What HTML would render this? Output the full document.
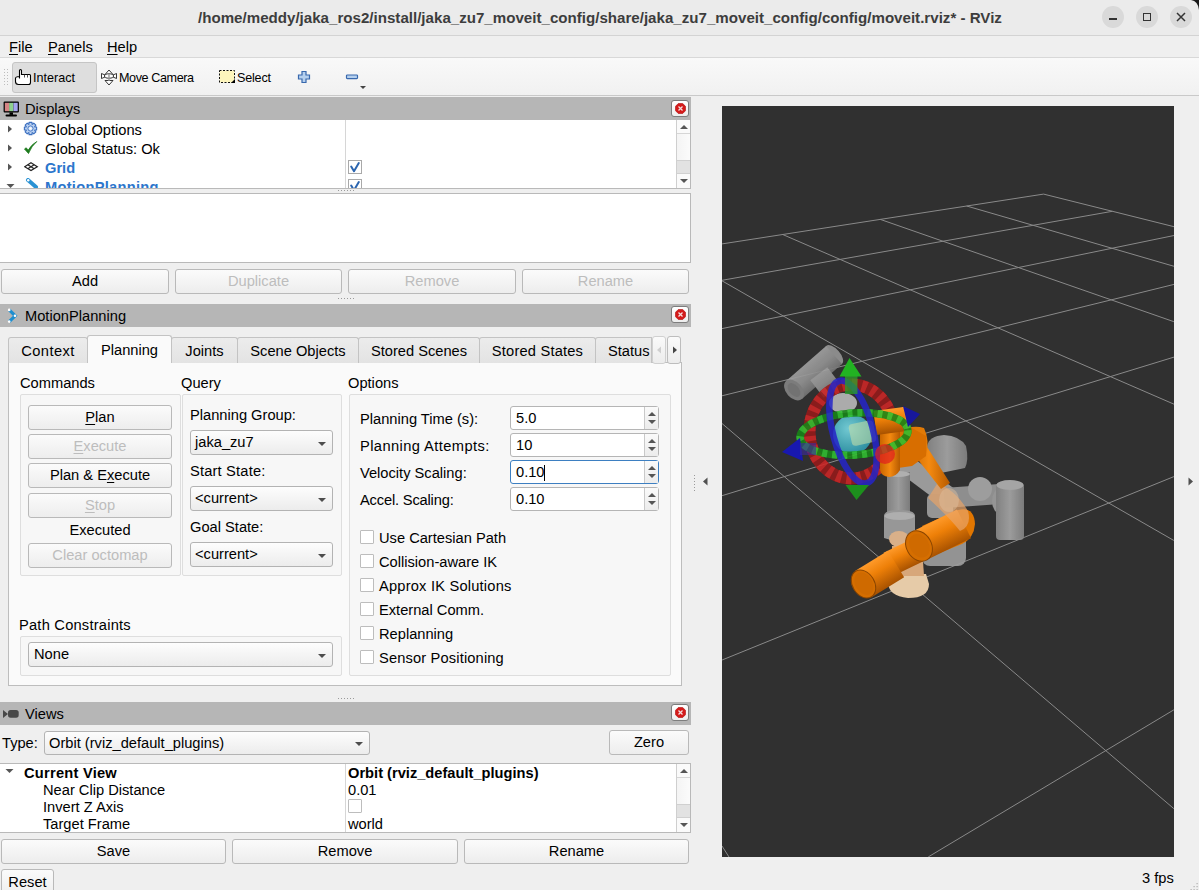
<!DOCTYPE html>
<html><head><meta charset="utf-8">
<style>
*{box-sizing:border-box}
html,body{margin:0;padding:0;width:1199px;height:890px;overflow:hidden;background:#efefef;font-family:"Liberation Sans",sans-serif;}
.a{position:absolute}
.t{position:absolute;font-size:14.67px;line-height:17px;white-space:pre;color:#000}
.u{text-decoration:underline;text-underline-offset:2px}
.btn{position:absolute;border:1px solid #b9b9b9;border-radius:3px;background:linear-gradient(#fbfbfb,#ededed);}
.btn span{position:absolute;left:0;right:0;text-align:center;font-size:14.67px;line-height:17px;white-space:pre;color:#000}
.dis span{color:#bdbdbd}
.dock{position:absolute;left:0;width:691px;height:23px;background:#b6b6b6}
.dock .t{left:25px;top:4px}
.close{position:absolute;left:671px;width:18px;height:17px;border:1px solid #7d7d7d;border-radius:3px;background:linear-gradient(#fff,#ededed)}
.close svg{position:absolute;left:3px;top:2px}
.tab{position:absolute;top:337px;height:26px;border:1px solid #c3c3c3;border-bottom:none;border-radius:3px 3px 0 0;background:linear-gradient(#ececec,#e3e3e3)}
.tab span{position:absolute;left:0;right:0;top:5px;text-align:center;font-size:14.67px;line-height:17px;white-space:pre;color:#000}
.gb{position:absolute;border:1px solid #dedede;border-radius:2px;background:#f7f7f7}
.combo{position:absolute;border:1px solid #b3b3b3;border-radius:3px;background:linear-gradient(#fdfdfd,#ececec)}
.combo span{position:absolute;left:4px;top:3px;font-size:14.67px;line-height:17px;white-space:pre;color:#000}
.arr{position:absolute;width:0;height:0;border-left:4px solid transparent;border-right:4px solid transparent;border-top:4px solid #4d4d4d;margin:1px 0 0 1px}
.spin{position:absolute;left:510px;width:149px;height:24px;border:1px solid #b5b5b5;border-radius:3px;background:#fff}
.spin span{position:absolute;left:5px;top:3px;font-size:14.67px;line-height:17px;white-space:pre;color:#000}
.spin .sb{position:absolute;left:133px;top:0;width:14px;height:22px;border-left:1px solid #c9c9c9;background:linear-gradient(#fafafa,#ececec)}
.up{position:absolute;left:3px;top:5px;width:0;height:0;border-left:4px solid transparent;border-right:4px solid transparent;border-bottom:4px solid #555}
.dn{position:absolute;left:3px;top:13px;width:0;height:0;border-left:4px solid transparent;border-right:4px solid transparent;border-top:4px solid #555}
.cb{position:absolute;width:14px;height:14px;border:1px solid #bdbdbd;background:#fff;border-radius:1px}
.scroll{position:absolute;width:15px;border-left:1px solid #d4d4d4;background:#f7f7f7}
</style></head><body>

<!-- title bar -->
<div class="a" style="left:0;top:0;width:1199px;height:36px;background:#ebebeb;border-bottom:1px solid #d3d3d3"></div>
<div class="t" style="left:198px;top:9px;font-weight:bold;color:#3d3d3d;font-size:15.12px">/home/meddy/jaka_ros2/install/jaka_zu7_moveit_config/share/jaka_zu7_moveit_config/config/moveit.rviz* - RViz</div>
<div class="a" style="left:1102px;top:6px;width:22px;height:22px;border-radius:11px;background:#d9d9d9"></div>
<div class="a" style="left:1109px;top:18px;width:8px;height:2px;background:#333"></div>
<div class="a" style="left:1136px;top:6px;width:22px;height:22px;border-radius:11px;background:#d9d9d9"></div>
<div class="a" style="left:1143px;top:13px;width:8px;height:8px;border:1.5px solid #333"></div>
<div class="a" style="left:1170px;top:6px;width:22px;height:22px;border-radius:11px;background:#d9d9d9"></div>
<svg class="a" style="left:1170px;top:6px" width="22" height="22"><path d="M7 7L15 15M15 7L7 15" stroke="#333" stroke-width="1.5"/></svg>

<!-- menu bar -->
<div class="a" style="left:0;top:36px;width:1199px;height:22px;background:#efefef;border-bottom:1px solid #d8d8d8"></div>
<div class="t" style="left:9px;top:39px"><span class="u">F</span>ile</div>
<div class="t" style="left:48px;top:39px"><span class="u">P</span>anels</div>
<div class="t" style="left:107px;top:39px"><span class="u">H</span>elp</div>

<!-- toolbar -->
<div class="a" style="left:0;top:58px;width:1199px;height:38px;background:linear-gradient(#f9f9f9,#f1f1f1);border-bottom:1px solid #c9c9c9"></div>
<div class="a" style="left:12px;top:62px;width:85px;height:31px;border:1px solid #c5c5c5;border-radius:3px;background:#dedede"></div>
<div class="t" style="left:33px;top:71px;font-size:12.6px;line-height:15px">Interact</div>
<div class="t" style="left:119px;top:71px;font-size:12.6px;line-height:15px;letter-spacing:-0.4px">Move Camera</div>
<svg class="a" style="left:219px;top:70px" width="17" height="14"><rect x="0.5" y="0.5" width="15" height="12" fill="#fdf5bd" stroke="#111" stroke-dasharray="2 1.5"/><path d="M12 13L16 13L16 9Z" fill="#000"/></svg>
<div class="t" style="left:237px;top:71px;font-size:12.6px;line-height:15px;letter-spacing:-0.2px">Select</div>


<!-- toolbar icons -->
<svg class="a" style="left:3px;top:68px" width="6" height="18"><g fill="#bdbdbd"><rect x="1" y="1" width="1" height="1"/><rect x="4" y="1" width="1" height="1"/><rect x="1" y="4" width="1" height="1"/><rect x="4" y="4" width="1" height="1"/><rect x="1" y="7" width="1" height="1"/><rect x="4" y="7" width="1" height="1"/><rect x="1" y="10" width="1" height="1"/><rect x="4" y="10" width="1" height="1"/><rect x="1" y="13" width="1" height="1"/><rect x="4" y="13" width="1" height="1"/><rect x="1" y="16" width="1" height="1"/><rect x="4" y="16" width="1" height="1"/></g></svg>
<svg class="a" style="left:14px;top:68px" width="18" height="18"><path d="M5.5 10.5V2.5Q5.5 1.5 6.5 1.5Q7.5 1.5 7.5 2.5V6.5H15.5Q16.5 6.5 16.5 7.5V14.5Q16.5 16.5 14.5 16.5H4.5Q1.5 16.5 1.5 13.5V10.5Q1.5 8.5 5.5 8.5" fill="#fff" stroke="#000" stroke-width="1.1"/><path d="M10.5 6.8V9.5M13.5 6.8V9.5" stroke="#555" stroke-width="1"/></svg>
<svg class="a" style="left:100px;top:69px" width="18" height="17"><g fill="#fff" stroke="#222" stroke-width="0.9"><path d="M9 1L5 5.5H13Z"/><path d="M9 16L5 11.5H13Z"/><path d="M1.5 4.5V9.5L5 8V6ZM16.5 4.5V9.5L13 8V6Z"/><ellipse cx="9" cy="7" rx="4.5" ry="2.2"/></g><rect x="8.3" y="5" width="1.4" height="7" fill="#999"/></svg>
<svg class="a" style="left:297px;top:70px" width="14" height="14"><path d="M5 1.5H9V5H12.5V9H9V12.5H5V9H1.5V5H5Z" fill="#b5d0ee" stroke="#3868ad" stroke-width="1.2"/></svg>
<svg class="a" style="left:345px;top:74px" width="14" height="6"><rect x="1.5" y="1" width="11" height="3.6" rx="0.8" fill="#b5d0ee" stroke="#3868ad" stroke-width="1.2"/></svg>
<svg class="a" style="left:359px;top:85px" width="8" height="5"><path d="M1 1H7L4 4Z" fill="#444"/></svg>

<!-- Displays dock -->
<div class="dock" style="top:97px"><div class="t">Displays</div></div>
<div class="close" style="top:100px"><svg width="11" height="11"><path d="M3.3 0.5H7.7L10.5 3.3V7.7L7.7 10.5H3.3L0.5 7.7V3.3Z" fill="#d41a1a" stroke="#b00c0c" stroke-width="0.6"/><path d="M3.5 3.5L7.5 7.5M7.5 3.5L3.5 7.5" stroke="#f4dede" stroke-width="1.3"/></svg></div>
<div class="a" style="left:0;top:120px;width:691px;height:69px;background:#fff;border-bottom:1px solid #b9b9b9;border-right:1px solid #b9b9b9"></div>
<div class="a" style="left:345px;top:120px;width:1px;height:68px;background:#d6d6d6"></div>
<div class="a" style="left:676px;top:120px;width:14px;height:68px;border-left:1px solid #cfcfcf;background:linear-gradient(90deg,#f4f4f4,#fbfbfb)">
<div class="a" style="left:0;top:0;width:13px;height:14px;border-bottom:1px solid #d6d6d6;background:#fafafa"><svg class="a" style="left:2px;top:4px" width="10" height="6"><path d="M1 5H9L5 1Z" fill="#555"/></svg></div>
<div class="a" style="left:0;top:40px;width:13px;height:14px;background:#e2e2e2;border-top:1px solid #d0d0d0;border-bottom:1px solid #d0d0d0"></div>
<div class="a" style="left:0;top:54px;width:13px;height:14px;background:#fafafa"><svg class="a" style="left:2px;top:4px" width="10" height="6"><path d="M1 1H9L5 5Z" fill="#555"/></svg></div>
</div>
<div class="t" style="left:45px;top:122px">Global Options</div>
<div class="t" style="left:45px;top:141px">Global Status: Ok</div>
<div class="t" style="left:45px;top:160px;font-weight:bold;color:#2c76cc">Grid</div>
<div class="a" style="left:0;top:178px;width:676px;height:10px;overflow:hidden"><div class="t" style="left:45px;top:1px;font-weight:bold;color:#2c76cc;letter-spacing:0.27px">MotionPlanning</div></div>


<svg class="a" style="left:3px;top:101px" width="17" height="17"><rect x="0.6" y="0.6" width="15.3" height="10.8" rx="1" fill="#000"/><rect x="1.8" y="1.8" width="4.3" height="8.4" fill="#d58585"/><rect x="6.1" y="1.8" width="4.3" height="8.4" fill="#8fd08f"/><rect x="10.4" y="1.8" width="4.3" height="8.4" fill="#a5a5f0"/><rect x="6.5" y="11.4" width="3.5" height="2.5" fill="#000"/><rect x="2.5" y="13.6" width="11.5" height="2" rx="1" fill="#000"/></svg>
<svg class="a" style="left:7px;top:125px" width="6" height="9"><path d="M1 0.5V7.5L5 4Z" fill="#555"/></svg>
<svg class="a" style="left:7px;top:144px" width="6" height="9"><path d="M1 0.5V7.5L5 4Z" fill="#555"/></svg>
<svg class="a" style="left:7px;top:163px" width="6" height="9"><path d="M1 0.5V7.5L5 4Z" fill="#555"/></svg>
<svg class="a" style="left:6px;top:183px" width="9" height="6"><path d="M0.5 1H8.5L4.5 5Z" fill="#555"/></svg>
<svg class="a" style="left:23px;top:121px" width="15" height="15"><path d="M11.84 5.97 L13.62 6.00 L13.62 9.00 L11.84 9.03 L11.65 9.48 L12.89 10.77 L10.77 12.89 L9.48 11.65 L9.03 11.84 L9.00 13.62 L6.00 13.62 L5.97 11.84 L5.52 11.65 L4.23 12.89 L2.11 10.77 L3.35 9.48 L3.16 9.03 L1.38 9.00 L1.38 6.00 L3.16 5.97 L3.35 5.52 L2.11 4.23 L4.23 2.11 L5.52 3.35 L5.97 3.16 L6.00 1.38 L9.00 1.38 L9.03 3.16 L9.48 3.35 L10.77 2.11 L12.89 4.23 L11.65 5.52Z" fill="#b9d0f0" stroke="#3b6fc0" stroke-width="1.1" stroke-linejoin="round"/><circle cx="7.5" cy="7.5" r="2.6" fill="#d8e6f8" stroke="#3b6fc0" stroke-width="0.9"/><circle cx="7.5" cy="7.5" r="1.1" fill="#fff"/></svg>
<svg class="a" style="left:23px;top:140px" width="15" height="15"><path d="M1.5 9L5.5 13.5Q8.5 6 13.8 1.5Q8 5 5.2 10.2L3.2 7.8Z" fill="#1c7a1c" stroke="#1c7a1c" stroke-width="0.8"/></svg>
<svg class="a" style="left:24px;top:162px" width="15" height="10"><g fill="none" stroke="#222" stroke-width="1.2"><path d="M7 0.8L13.3 4.7L7 8.6L0.7 4.7Z"/><path d="M3.85 2.75L10.15 6.65M10.15 2.75L3.85 6.65"/></g></svg>
<div class="a" style="left:0;top:178px;width:60px;height:10px;overflow:hidden"><svg class="a" style="left:25px;top:0px" width="14" height="14"><path d="M3 2L11 9" stroke="#2a92d4" stroke-width="4" stroke-linecap="round"/><circle cx="3.2" cy="2.2" r="1.2" fill="#fff"/></svg></div>
<svg class="a" style="left:347px;top:159px" width="16" height="16"><rect x="1.5" y="1.5" width="13" height="13" fill="#fff" stroke="#a9a9a9" stroke-width="1"/><path d="M4.2 7.6L7 12.2L11.8 4" fill="none" stroke="#2b65b0" stroke-width="2" stroke-linecap="round" stroke-linejoin="round"/></svg>
<div class="a" style="left:340px;top:178px;width:30px;height:10px;overflow:hidden"><svg class="a" style="left:7px;top:0px" width="16" height="16"><rect x="1.5" y="1.5" width="13" height="13" fill="#fff" stroke="#a9a9a9" stroke-width="1"/><path d="M4.2 7.6L7 12.2L11.8 4" fill="none" stroke="#2b65b0" stroke-width="2" stroke-linecap="round" stroke-linejoin="round"/></svg></div>

<div class="a" style="left:0;top:193px;width:691px;height:70px;background:#fff;border:1px solid #b9b9b9;border-left:none"></div>

<div class="btn" style="left:1px;top:269px;width:168px;height:25px"><span style="top:3px">Add</span></div>
<div class="btn dis" style="left:175px;top:269px;width:167px;height:25px"><span style="top:3px">Duplicate</span></div>
<div class="btn dis" style="left:348px;top:269px;width:168px;height:25px"><span style="top:3px">Remove</span></div>
<div class="btn dis" style="left:522px;top:269px;width:167px;height:25px"><span style="top:3px">Rename</span></div>

<!-- MotionPlanning dock -->
<div class="dock" style="top:304px"><div class="t">MotionPlanning</div></div>
<svg class="a" style="left:6px;top:308px" width="12" height="16"><path d="M3.2 1.8L9.2 7.8L3.2 13.7" fill="none" stroke="#1e8fd0" stroke-width="3.2" stroke-linejoin="miter"/><circle cx="3.2" cy="1.9" r="1.3" fill="#fff"/><circle cx="9" cy="7.8" r="1.3" fill="#fff"/><circle cx="3.2" cy="13.6" r="1.3" fill="#fff"/></svg>
<div class="close" style="top:306px"><svg width="11" height="11"><path d="M3.3 0.5H7.7L10.5 3.3V7.7L7.7 10.5H3.3L0.5 7.7V3.3Z" fill="#d41a1a" stroke="#b00c0c" stroke-width="0.6"/><path d="M3.5 3.5L7.5 7.5M7.5 3.5L3.5 7.5" stroke="#f4dede" stroke-width="1.3"/></svg></div>

<!-- tab pane -->
<div class="a" style="left:8px;top:362px;width:674px;height:324px;background:#fafafa;border:1px solid #bdbdbd"></div>
<div class="tab" style="left:8px;width:80px"><span style="letter-spacing:0.44px">Context</span></div>
<div class="tab" style="left:87px;top:335px;height:28px;width:85px;background:#fafafa"><span style="top:6px">Planning</span></div>
<div class="tab" style="left:171px;width:67px"><span>Joints</span></div>
<div class="tab" style="left:237px;width:122px"><span>Scene Objects</span></div>
<div class="tab" style="left:358px;width:122px"><span>Stored Scenes</span></div>
<div class="tab" style="left:479px;width:117px"><span style="letter-spacing:0.19px">Stored States</span></div>
<div class="tab" style="left:595px;width:57px;border-radius:3px 0 0 0;overflow:hidden"><span style="left:12px;text-align:left">Status</span></div>

<div class="t" style="left:20px;top:375px">Commands</div>
<div class="t" style="left:181px;top:375px">Query</div>
<div class="t" style="left:348px;top:375px">Options</div>

<div class="gb" style="left:20px;top:394px;width:161px;height:182px"></div>
<div class="gb" style="left:182px;top:394px;width:160px;height:182px"></div>
<div class="gb" style="left:349px;top:394px;width:322px;height:282px"></div>

<div class="btn" style="left:28px;top:405px;width:144px;height:25px"><span style="top:3px"><span style="position:static" class="u">P</span>lan</span></div>
<div class="btn dis" style="left:28px;top:434px;width:144px;height:25px"><span style="top:3px"><span style="position:static" class="u">E</span>xecute</span></div>
<div class="btn" style="left:28px;top:463px;width:144px;height:25px"><span style="top:3px">Plan &amp; E<span style="position:static" class="u">x</span>ecute</span></div>
<div class="btn dis" style="left:28px;top:493px;width:144px;height:25px"><span style="top:3px"><span style="position:static" class="u">S</span>top</span></div>
<div class="t" style="left:28px;width:144px;text-align:center;top:522px">Executed</div>
<div class="btn dis" style="left:28px;top:543px;width:144px;height:25px"><span style="top:3px">Clear octomap</span></div>

<div class="t" style="left:190px;top:407px">Planning Group:</div>
<div class="combo" style="left:190px;top:430px;width:143px;height:25px"><span>jaka_zu7</span><i class="arr" style="left:126px;top:10px"></i></div>
<div class="t" style="left:190px;top:463px;letter-spacing:0.18px">Start State:</div>
<div class="combo" style="left:190px;top:486px;width:143px;height:25px"><span>&lt;current&gt;</span><i class="arr" style="left:126px;top:10px"></i></div>
<div class="t" style="left:190px;top:519px">Goal State:</div>
<div class="combo" style="left:190px;top:542px;width:143px;height:25px"><span>&lt;current&gt;</span><i class="arr" style="left:126px;top:10px"></i></div>

<div class="t" style="left:360px;top:411px">Planning Time (s):</div>
<div class="t" style="left:360px;top:438px;letter-spacing:0.42px">Planning Attempts:</div>
<div class="t" style="left:360px;top:465px">Velocity Scaling:</div>
<div class="t" style="left:360px;top:492px;letter-spacing:-0.17px">Accel. Scaling:</div>
<div class="spin" style="top:406px"><span>5.0</span><div class="sb"><i class="up"></i><i class="dn"></i></div></div>
<div class="spin" style="top:433px"><span>10</span><div class="sb"><i class="up"></i><i class="dn"></i></div></div>
<div class="spin" style="top:460px;border-color:#3d7fc1"><span>0.10</span><i class="a" style="left:33px;top:4px;width:1px;height:16px;background:#000"></i><div class="sb"><i class="up"></i><i class="dn"></i></div></div>
<div class="spin" style="top:487px"><span>0.10</span><div class="sb"><i class="up"></i><i class="dn"></i></div></div>

<div class="cb" style="left:360px;top:530px"></div><div class="t" style="left:379px;top:530px">Use Cartesian Path</div>
<div class="cb" style="left:360px;top:554px"></div><div class="t" style="left:379px;top:554px">Collision-aware IK</div>
<div class="cb" style="left:360px;top:578px"></div><div class="t" style="left:379px;top:578px;letter-spacing:0.2px">Approx IK Solutions</div>
<div class="cb" style="left:360px;top:602px"></div><div class="t" style="left:379px;top:602px">External Comm.</div>
<div class="cb" style="left:360px;top:626px"></div><div class="t" style="left:379px;top:626px">Replanning</div>
<div class="cb" style="left:360px;top:650px"></div><div class="t" style="left:379px;top:650px;letter-spacing:0.15px">Sensor Positioning</div>

<div class="t" style="left:19px;top:617px;letter-spacing:0.22px">Path Constraints</div>
<div class="gb" style="left:20px;top:636px;width:322px;height:40px"></div>
<div class="combo" style="left:28px;top:642px;width:305px;height:25px"><span style="left:5px">None</span><i class="arr" style="left:288px;top:10px"></i></div>

<!-- Views dock -->
<div class="dock" style="top:702px"><div class="t">Views</div></div>
<svg class="a" style="left:3px;top:709px" width="17" height="10"><path d="M0 1V9L5 5Z" fill="#484848"/><rect x="5" y="1" width="10.7" height="7.7" rx="2.6" fill="#484848"/></svg>
<div class="close" style="top:704px"><svg width="11" height="11"><path d="M3.3 0.5H7.7L10.5 3.3V7.7L7.7 10.5H3.3L0.5 7.7V3.3Z" fill="#d41a1a" stroke="#b00c0c" stroke-width="0.6"/><path d="M3.5 3.5L7.5 7.5M7.5 3.5L3.5 7.5" stroke="#f4dede" stroke-width="1.3"/></svg></div>
<div class="t" style="left:2px;top:735px">Type:</div>
<div class="combo" style="left:44px;top:731px;width:326px;height:24px"><span>Orbit (rviz_default_plugins)</span><i class="arr" style="left:309px;top:9px"></i></div>
<div class="btn" style="left:609px;top:730px;width:80px;height:25px"><span style="top:3px">Zero</span></div>

<div class="a" style="left:0;top:763px;width:691px;height:70px;background:#fff;border:1px solid #b9b9b9;border-left:none"></div>
<div class="a" style="left:345px;top:764px;width:1px;height:68px;background:#d6d6d6"></div>
<div class="a" style="left:676px;top:764px;width:14px;height:68px;border-left:1px solid #cfcfcf;background:linear-gradient(90deg,#f4f4f4,#fbfbfb)">
<div class="a" style="left:0;top:0;width:13px;height:14px;border-bottom:1px solid #d6d6d6;background:#fafafa"><svg class="a" style="left:2px;top:4px" width="10" height="6"><path d="M1 5H9L5 1Z" fill="#555"/></svg></div>
<div class="a" style="left:0;top:40px;width:13px;height:14px;background:#e2e2e2;border-top:1px solid #d0d0d0;border-bottom:1px solid #d0d0d0"></div>
<div class="a" style="left:0;top:54px;width:13px;height:14px;background:#fafafa"><svg class="a" style="left:2px;top:4px" width="10" height="6"><path d="M1 1H9L5 5Z" fill="#555"/></svg></div>
</div>
<div class="t" style="left:24px;top:765px;font-weight:bold;letter-spacing:0.24px">Current View</div>
<div class="t" style="left:43px;top:782px">Near Clip Distance</div>
<div class="t" style="left:43px;top:799px">Invert Z Axis</div>
<div class="t" style="left:43px;top:816px">Target Frame</div>
<div class="t" style="left:348px;top:765px;font-weight:bold">Orbit (rviz_default_plugins)</div>
<div class="t" style="left:348px;top:782px">0.01</div>
<div class="cb" style="left:348px;top:799px"></div>
<div class="t" style="left:348px;top:816px">world</div>

<div class="btn" style="left:1px;top:839px;width:225px;height:25px"><span style="top:3px">Save</span></div>
<div class="btn" style="left:232px;top:839px;width:226px;height:25px"><span style="top:3px">Remove</span></div>
<div class="btn" style="left:464px;top:839px;width:225px;height:25px"><span style="top:3px">Rename</span></div>
<div class="btn" style="left:1px;top:869px;width:53px;height:30px"><span style="top:4px">Reset</span></div>


<!-- tab scroll buttons -->
<div class="a" style="left:652px;top:336px;width:14px;height:28px;border:1px solid #d0d0d0;border-radius:3px;background:linear-gradient(#fafafa,#ececec)"><svg class="a" style="left:3px;top:9px" width="6" height="9"><path d="M5 0.5V7.5L1 4Z" fill="#cfcfcf"/></svg></div>
<div class="a" style="left:667px;top:336px;width:14px;height:28px;border:1px solid #bdbdbd;border-radius:3px;background:linear-gradient(#fafafa,#ececec)"><svg class="a" style="left:4px;top:9px" width="6" height="9"><path d="M1 0.5V7.5L5 4Z" fill="#444"/></svg></div>
<!-- splitter dots -->
<svg class="a" style="left:336px;top:188px" width="20" height="4"><g fill="#9a9a9a"><rect x="2" y="2" width="1" height="1"/><rect x="5" y="2" width="1" height="1"/><rect x="8" y="2" width="1" height="1"/><rect x="11" y="2" width="1" height="1"/><rect x="14" y="2" width="1" height="1"/><rect x="17" y="2" width="1" height="1"/></g></svg>
<svg class="a" style="left:336px;top:297px" width="20" height="4"><g fill="#9a9a9a"><rect x="2" y="1" width="1" height="1"/><rect x="5" y="1" width="1" height="1"/><rect x="8" y="1" width="1" height="1"/><rect x="11" y="1" width="1" height="1"/><rect x="14" y="1" width="1" height="1"/><rect x="17" y="1" width="1" height="1"/></g></svg>
<svg class="a" style="left:336px;top:697px" width="20" height="4"><g fill="#9a9a9a"><rect x="2" y="1" width="1" height="1"/><rect x="5" y="1" width="1" height="1"/><rect x="8" y="1" width="1" height="1"/><rect x="11" y="1" width="1" height="1"/><rect x="14" y="1" width="1" height="1"/><rect x="17" y="1" width="1" height="1"/></g></svg>
<svg class="a" style="left:693px;top:474px" width="4" height="20"><g fill="#9a9a9a"><rect x="1" y="1" width="1" height="1"/><rect x="1" y="4" width="1" height="1"/><rect x="1" y="7" width="1" height="1"/><rect x="1" y="10" width="1" height="1"/><rect x="1" y="13" width="1" height="1"/><rect x="1" y="16" width="1" height="1"/></g></svg>
<svg class="a" style="left:702px;top:477px" width="7" height="10"><path d="M5.5 0.5V8.5L1 4.5Z" fill="#505050"/></svg>
<svg class="a" style="left:1187px;top:477px" width="7" height="10"><path d="M1.5 0.5V8.5L6 4.5Z" fill="#505050"/></svg>
<!-- views tree arrow -->
<svg class="a" style="left:5px;top:768px" width="10" height="7"><path d="M0.5 1H8.5L4.5 5Z" fill="#555"/></svg>
<!-- size grip -->
<svg class="a" style="left:1186px;top:877px" width="13" height="13"><g fill="#b0b0b0"><rect x="10.5" y="6" width="1.2" height="1.2"/><rect x="7.5" y="9" width="1.2" height="1.2"/><rect x="10.5" y="9" width="1.2" height="1.2"/><rect x="4.5" y="12" width="1.2" height="1.2"/><rect x="7.5" y="12" width="1.2" height="1.2"/><rect x="10.5" y="12" width="1.2" height="1.2"/></g></svg>
<!-- window corner -->
<svg class="a" style="left:1187px;top:0px" width="12" height="12"><path d="M4 0H12V10Q11 1 4 0Z" fill="#1a1a1a"/></svg>

<!-- 3D view -->
<div class="a" style="left:722px;top:106px;width:452px;height:751px;background:#303030;overflow:hidden" id="v3d"><svg width="452" height="751" style="position:absolute;left:0;top:0">
<g stroke="#a3a3a3" stroke-width="1" opacity="0.78"><line x1="321.6" y1="88.1" x2="0.1" y2="137.9"/><line x1="390.3" y1="105.3" x2="0.0" y2="174.3"/><line x1="452.0" y1="129.5" x2="0.0" y2="222.6"/><line x1="452.0" y1="178.4" x2="0.0" y2="289.8"/><line x1="452.0" y1="251.1" x2="0.0" y2="389.7"/><line x1="451.9" y1="370.6" x2="0.1" y2="554.0"/><line x1="451.9" y1="603.8" x2="206.3" y2="750.9"/><line x1="321.6" y1="88.1" x2="452.0" y2="120.7"/><line x1="244.7" y1="100.0" x2="452.0" y2="160.3"/><line x1="158.3" y1="113.4" x2="451.9" y2="215.7"/><line x1="60.7" y1="128.5" x2="452.0" y2="298.2"/><line x1="0.0" y1="174.8" x2="451.9" y2="434.5"/><line x1="0.0" y1="317.5" x2="451.9" y2="702.7"/><line x1="0.0" y1="740" x2="7" y2="751"/></g>
<g id="robot">
<defs><linearGradient id="go" x1="0" y1="0" x2="0" y2="1"><stop offset="0" stop-color="#ff9a2a"/><stop offset="0.4" stop-color="#ee8008"/><stop offset="1" stop-color="#a85200"/></linearGradient><linearGradient id="go2" x1="0" y1="0" x2="1" y2="0"><stop offset="0" stop-color="#c86500"/><stop offset="0.5" stop-color="#f58a10"/><stop offset="1" stop-color="#b65a00"/></linearGradient><linearGradient id="gg" x1="0" y1="0" x2="0" y2="1"><stop offset="0" stop-color="#c8c8c8"/><stop offset="0.5" stop-color="#ababab"/><stop offset="1" stop-color="#8a8a8a"/></linearGradient><linearGradient id="gg2" x1="0" y1="0" x2="0" y2="1"><stop offset="0" stop-color="#a2a2a2"/><stop offset="0.5" stop-color="#939393"/><stop offset="1" stop-color="#767676"/></linearGradient><linearGradient id="ggv" x1="0" y1="0" x2="1" y2="0"><stop offset="0" stop-color="#8a8a8a"/><stop offset="0.5" stop-color="#a8a8a8"/><stop offset="1" stop-color="#848484"/></linearGradient><radialGradient id="cy" cx="0.4" cy="0.35" r="0.7"><stop offset="0" stop-color="#78d6e0"/><stop offset="1" stop-color="#2a95a8"/></radialGradient></defs>
<g opacity="0.9">
<g transform="translate(72.0,284.0) rotate(-41.2)" opacity="1"><ellipse cx="53.2" cy="0" rx="6.0" ry="12.0" fill="#959595"/><rect x="0" y="-12.0" width="53.2" height="24.0" fill="url(#gg2)"/><ellipse cx="0" cy="0" rx="8.0" ry="12.0" fill="#858585"/></g>
<ellipse cx="72" cy="284" rx="5" ry="8" transform="rotate(-41 72 284)" fill="#7a7a7a"/>
<g transform="translate(95.0,283.0) rotate(-37.4)" opacity="1"><rect x="0" y="-11.0" width="21.4" height="22.0" fill="url(#gg2)"/></g>
<ellipse cx="121" cy="297" rx="14" ry="10" fill="#b9b9b9"/>
<path d="M205 340 Q207 330 222 329 Q238 330 244 340 Q247 354 243 362 L214 368 Q205 360 205 340Z" fill="url(#ggv)"/>
<g transform="translate(180.0,356.0) rotate(36.9)" opacity="1"><rect x="0" y="-10.0" width="60.0" height="20.0" fill="#a6a6a6"/></g>
<rect x="165" y="366" width="23" height="44" fill="url(#ggv)"/>
<ellipse cx="176.5" cy="368" rx="11.5" ry="3" fill="#bdbdbd"/>
<path d="M162 410 Q162 404 177 404 Q193 404 193 410 L193 432 Q177 438 162 432Z" fill="#a3a3a3"/>
<ellipse cx="177.5" cy="410" rx="15" ry="4" fill="#bcbcbc"/>
<rect x="205" y="388" width="26" height="24" rx="5" fill="#a0a0a0"/>
<rect x="200" y="428" width="44" height="32" rx="8" fill="#9e9e9e"/>
<g transform="translate(222.0,392.0) rotate(-4.1)" opacity="1"><rect x="0" y="-10.0" width="56.1" height="20.0" fill="#999999"/></g>
<circle cx="258" cy="383" r="12" fill="#a9a9a9"/>
<ellipse cx="279" cy="395" rx="9" ry="13" fill="#a0a0a0"/>
<rect x="274" y="377" width="28" height="57" rx="4" fill="url(#ggv)"/>
<ellipse cx="288" cy="379" rx="13.5" ry="5" fill="#b2b2b2"/>
</g>
<path d="M166 476 L170 468 L204 468 L207 478 Q207 492 186 492 Q166 490 166 476Z" fill="#e6cba8"/>
<path d="M170 440 L200 440 L202 470 L170 470Z" fill="#d7a77a"/>
<ellipse cx="177" cy="433" rx="10" ry="8" fill="#d9b089"/>
<g transform="translate(167.0,458.0) rotate(-25.8)" opacity="1"><rect x="0" y="-12.5" width="32.2" height="25.0" fill="url(#go)"/></g>
<g transform="translate(141.5,478.0) rotate(-31.6)" opacity="1"><rect x="0" y="-15.5" width="38.2" height="31.0" fill="url(#go)"/></g>
<g transform="translate(141.5 478) rotate(-32)"><ellipse rx="11" ry="15" fill="#d56e00" stroke="#8a4500" stroke-width="1"/><ellipse cx="0.5" rx="8.5" ry="12" fill="#cf6a00"/></g>
<path d="M236 404 Q252 400 253 418 Q252 432 240 438 L215 448 L200 420 Z" fill="#e17600"/>
<g transform="translate(197.0,440.0) rotate(-26.1)" opacity="1"><rect x="0" y="-16.0" width="50.1" height="32.0" fill="url(#go)"/></g>
<g transform="translate(197 440) rotate(-30)"><ellipse rx="12.5" ry="16" fill="#d56e00" stroke="#8a4500" stroke-width="1"/><ellipse cx="0.5" rx="9.5" ry="12.5" fill="#cf6a00"/></g>
<path d="M215 378 Q232 382 246 405 Q250 420 238 425 Q226 410 206 392Z" fill="#e8a468" opacity="0.7"/>
<ellipse cx="227" cy="394" rx="10" ry="12" fill="#e0c0a0" opacity="0.45"/>
<path d="M186 341 L200 333 L228 377 L219 383Z" fill="url(#go2)"/>
<path d="M182 345 Q186 332 198 330 Q206 336 204 347 Z" fill="#f08a10"/>
<circle cx="130.5" cy="328.5" r="19.5" fill="url(#cy)" opacity="0.92"/>
<g transform="rotate(-12 141 327)" opacity="0.55"><rect x="128" y="316" width="25" height="22" rx="4" fill="#c8e0a8"/></g>
<g opacity="0.88"><ellipse cx="129.5" cy="325.5" rx="42" ry="47" fill="none" stroke="#961a1a" stroke-width="12"/><ellipse cx="129.5" cy="325.5" rx="42" ry="47" fill="none" stroke="#cf2626" stroke-width="12" stroke-dasharray="5 5"/></g>
<path d="M176 326 Q190 318 202 322 Q208 334 204 350 Q194 358 178 356Z" fill="#e27a06"/>
<path d="M174 326 L190 322 L204 330 L204 350 L190 360 L176 362Z" fill="#d86e00"/>
<path d="M158 326 L178 324 L178 364 Q174 371 167 371 Q159 370 158 364Z" fill="url(#go2)"/>
<g transform="translate(153.0,317.0) rotate(-7.6)" opacity="1"><ellipse cx="30.3" cy="0" rx="5.0" ry="12.0" fill="#f39225"/><rect x="0" y="-12.0" width="30.3" height="24.0" fill="url(#go)"/></g>
<g transform="rotate(-4 132 328)" opacity="0.88"><ellipse cx="132" cy="328" rx="54" ry="21" fill="none" stroke="#178517" stroke-width="7.5"/><ellipse cx="132" cy="328" rx="54" ry="21" fill="none" stroke="#30c030" stroke-width="7.5" stroke-dasharray="5 5"/></g>
<ellipse cx="131" cy="326" rx="20" ry="53" transform="rotate(-15 131 326)" fill="none" stroke="#2424c8" stroke-width="6.5" opacity="0.85"/>
<rect x="123" y="270" width="12.5" height="18" fill="#2aa02a" opacity="0.75"/>
<polygon points="127.5,252 117.5,270.5 139.5,270.5" fill="#22b322"/>
<polygon points="134.5,394 123.5,379 147,379" fill="#1d8f1d"/>
<polygon points="60,346 78,332 81,355" fill="#1818b0"/>
<rect x="78" y="337" width="16" height="12" fill="#3a2aa0" opacity="0.6"/>
<polygon points="198,308 181,300 186,321" fill="#17179c"/>
<circle cx="163" cy="348" r="10" fill="#e01e1e" opacity="0.72"/>
</g>
</svg></div>
<div class="t" style="left:1142px;top:870px">3 fps</div>

</body></html>
